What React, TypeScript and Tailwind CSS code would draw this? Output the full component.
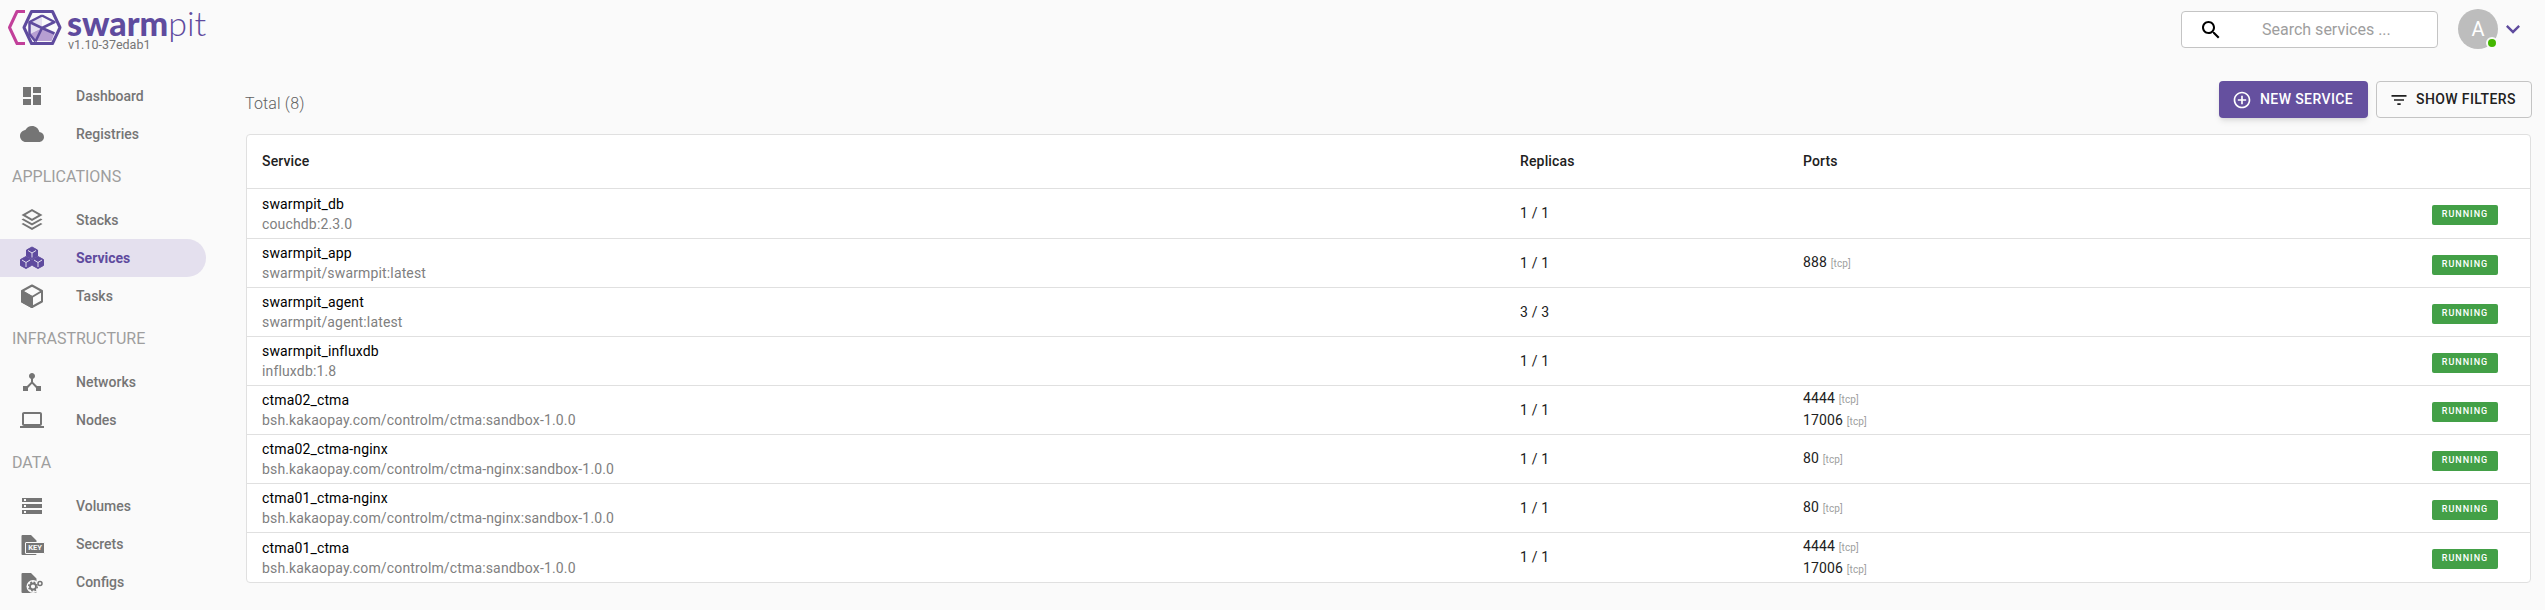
const p = {
  dashboard: "M3 13h8V3H3v10zm0 8h8v-6H3v6zm10 0h8V11h-8v10zm0-18v6h8V3h-8z",
  cloud: "M19.35 10.04C18.67 6.59 15.64 4 12 4 9.11 4 6.6 5.64 5.35 8.04 2.34 8.36 0 10.91 0 14c0 3.31 2.69 6 6 6h13c2.76 0 5-2.24 5-5 0-2.64-2.05-4.78-4.65-4.96z",
  stacks: "M12 1 1.5 7 12 13l10.5-6L12 1zm0 2.3L18.5 7 12 10.7 5.5 7 12 3.300zM3.300 10.500 1.500 11.500 12 17.500l10.500-6-1.800-1L12 15.200 3.300 10.500zm0 4.500-1.800 1L12 22l10.500-6-1.800-1L12 19.700 3.300 15z",
  hub: "M17 16l-4-4V8.820C14.160 8.400 15 7.300 15 6c0-1.660-1.340-3-3-3S9 4.340 9 6c0 1.300.840 2.400 2 2.820V12l-4 4H3v5h5v-3.050l4-4.200 4 4.200V21h5v-5h-4z",
  laptop: "M20 18c1.100 0 1.990-.900 1.990-2L22 6c0-1.100-.900-2-2-2H4c-1.100 0-2 .900-2 2v10c0 1.100.900 2 2 2H0v2h24v-2h-4zM4 6h16v10H4V6z",
  volumes: "M2 20h20v-4H2v4zm2-3h2v2H4v-2zM2 4v4h20V4H2zm4 3H4V5h2v2zm-4 7h20v-4H2v4zm2-3h2v2H4v-2z",
  file: "M2.500 3h8.500l5.500 5.500V22a1 1 0 0 1-1 1h-13a1 1 0 0 1-1-1V4a1 1 0 0 1 1-1z",
  search: "M15.500 14h-.790l-.280-.270C15.410 12.590 16 11.110 16 9.500 16 5.910 13.090 3 9.500 3S3 5.910 3 9.500 5.910 16 9.500 16c1.610 0 3.090-.590 4.230-1.570l.270.280v.790l5 4.990L20.490 19l-4.990-5zm-6 0C7.010 14 5 11.990 5 9.500S7.010 5 9.500 5 14 7.010 14 9.500 11.990 14 9.500 14z",
  add: "M13 7h-2v4H7v2h4v4h2v-4h4v-2h-4V7zm-1-5C6.480 2 2 6.480 2 12s4.480 10 10 10 10-4.480 10-10S17.520 2 12 2zm0 18c-4.410 0-8-3.590-8-8s3.590-8 8-8 8 3.590 8 8-3.590 8-8 8z",
  filter: "M10 18h4v-2h-4v2zM3 6v2h18V6H3zm3 7h12v-2H6v2z",
  more: "M16.590 8.590L12 13.170 7.410 8.590 6 10l6 6 6-6z",
};

const Icon = ({ d, className }: { d: string; className: string }) => (
  <svg viewBox="0 0 24 24" className={className} fill="currentColor">
    <path d={d} />
  </svg>
);

const Logo = () => (
  <svg viewBox="0 0 62 50" className="w-[62px] h-[50px] shrink-0" fill="none">
    <path d="M25 11.500h-8L9.500 27.500 17 43.500h8" stroke="#c2409a" strokeWidth="3" strokeLinejoin="round" />
    <path d="M31.500 11.500h21l7.500 16-7.500 16h-21L24 27.500z" fill="#fafafa" stroke="#5f4b9e" strokeWidth="3" strokeLinejoin="round" />
    <path d="M42 16 30 22v12l12-6.500z" fill="#e4dff0" />
    <path d="M42 28 30 34l4 7h17.500l3-7.500z" fill="#b79fd2" />
    <path d="M42 15.500 29.500 22v12l6 7.500M29.500 22 42 28l12.500-6L42 15.500M42 28v0l-6.500 13.500M42 28l12.500 5.500" stroke="#5f4b9e" strokeWidth="2.500" strokeLinejoin="round" />
  </svg>
);

const Cube = ({ x, y }: { x: number; y: number }) => (
  <g transform={`translate(${x} ${y})`}>
    <path d="M0-6 5.500-3v6L0 6l-5.500-3v-6z" fill="currentColor" stroke="currentColor" strokeWidth="1" strokeLinejoin="round" />
    <path d="M-4-2.500 0 0l4-2.500M0 0v4.500" stroke="#e4e0ee" strokeWidth="1" fill="none" />
  </g>
);

const ServicesIcon = () => (
  <svg viewBox="0 0 24 24" className="w-6 h-6">
    <Cube x={12} y={7} />
    <Cube x={6} y={16.5} />
    <Cube x={18} y={16.5} />
  </svg>
);

const TasksIcon = () => (
  <svg viewBox="0 0 24 24" className="w-6 h-6" fill="none" stroke="currentColor" strokeWidth="2" strokeLinejoin="round">
    <path d="M12 13 2 7.500v10L12 23z" fill="currentColor" />
    <path d="M12 1.500 22 7v10.500L12 23 2 17.500V7zM2 7l10 6 10-6" />
  </svg>
);

const KeyIcon = () => (
  <span className="relative block w-6 h-6">
    <Icon d={p.file} className="w-6 h-6" />
    <span className="absolute left-[5px] top-[10px] w-[20px] h-[12px] border border-[#fafafa] bg-[#757575] rounded-[1px] text-[7.500px] leading-[10px] font-bold text-center text-[#fafafa]">KEY</span>
  </span>
);

const GearIcon = () => (
  <svg viewBox="0 0 24 24" className="w-6 h-6">
    <path d={p.file} fill="currentColor" />
    <circle cx="13" cy="16.500" r="6.500" fill="#fafafa" />
    <circle cx="13" cy="16.500" r="3" fill="none" stroke="currentColor" strokeWidth="1.800" />
    <circle cx="13" cy="16.500" r="4.300" fill="none" stroke="currentColor" strokeWidth="1.500" strokeDasharray="1.700 1.700" />
    <circle cx="20" cy="13.500" r="2" fill="none" stroke="currentColor" strokeWidth="1.500" />
  </svg>
);

const NavItem = ({ label, icon, active }: { label: string; icon: React.ReactNode; active?: boolean }) => (
  <div className={`flex items-center h-[38px] w-[206px] rounded-r-[19px] pl-[20px] ${active ? "bg-[#e4e0ee] text-[#5f4b9e]" : "text-[#757575]"}`}>
    <span className="w-[56px] shrink-0">{icon}</span>
    <span className={`text-[14px] ${active ? "font-bold" : "font-medium"}`}>{label}</span>
  </div>
);

const Group = ({ label }: { label: string }) => (
  <div className="h-[48px] pl-3 flex items-center text-[16px] text-[#9e9e9e]">{label}</div>
);

const nav = (d: string) => <Icon d={d} className="w-6 h-6" />;

const services = [
  { name: "swarmpit_db", image: "couchdb:2.3.0", replicas: "1 / 1", ports: [] as string[], h: "h-[50px]" },
  { name: "swarmpit_app", image: "swarmpit/swarmpit:latest", replicas: "1 / 1", ports: ["888"], h: "h-[49px]" },
  { name: "swarmpit_agent", image: "swarmpit/agent:latest", replicas: "3 / 3", ports: [], h: "h-[49px]" },
  { name: "swarmpit_influxdb", image: "influxdb:1.8", replicas: "1 / 1", ports: [], h: "h-[49px]" },
  { name: "ctma02_ctma", image: "bsh.kakaopay.com/controlm/ctma:sandbox-1.0.0", replicas: "1 / 1", ports: ["4444", "17006"], h: "h-[49px]" },
  { name: "ctma02_ctma-nginx", image: "bsh.kakaopay.com/controlm/ctma-nginx:sandbox-1.0.0", replicas: "1 / 1", ports: ["80"], h: "h-[49px]" },
  { name: "ctma01_ctma-nginx", image: "bsh.kakaopay.com/controlm/ctma-nginx:sandbox-1.0.0", replicas: "1 / 1", ports: ["80"], h: "h-[49px]" },
  { name: "ctma01_ctma", image: "bsh.kakaopay.com/controlm/ctma:sandbox-1.0.0", replicas: "1 / 1", ports: ["4444", "17006"], h: "h-[49px]" },
];

export default function App() {
  return (
    <div className="flex w-[2545px] h-[610px] overflow-hidden bg-[#fafafa] font-['Roboto',sans-serif]">
      <aside className="w-[246px] shrink-0">
        <div className="h-[77px] flex items-start">
          <Logo />
          <div className="ml-[5px] flex flex-col">
            <div className="mt-[9px] text-[#5f4b9e] text-[34px] leading-[28px] font-['Lato',sans-serif] whitespace-nowrap">
              <span className="font-black">swarm</span>
              <span className="font-light">pit</span>
            </div>
            <div className="mt-[2px] text-[12.500px] leading-[12px] text-[#757575] ml-[1px]">v1.10-37edab1</div>
          </div>
        </div>
        <NavItem label="Dashboard" icon={nav(p.dashboard)} />
        <NavItem label="Registries" icon={nav(p.cloud)} />
        <Group label="APPLICATIONS" />
        <NavItem label="Stacks" icon={nav(p.stacks)} />
        <NavItem label="Services" icon={<ServicesIcon />} active />
        <NavItem label="Tasks" icon={<TasksIcon />} />
        <Group label="INFRASTRUCTURE" />
        <NavItem label="Networks" icon={nav(p.hub)} />
        <NavItem label="Nodes" icon={nav(p.laptop)} />
        <Group label="DATA" />
        <NavItem label="Volumes" icon={nav(p.volumes)} />
        <NavItem label="Secrets" icon={<KeyIcon />} />
        <NavItem label="Configs" icon={<GearIcon />} />
      </aside>

      <main className="flex-1 min-w-0 pr-[13px]">
        <div className="h-[58px] flex items-center justify-end pr-[5px]">
          <div className="flex items-center w-[257px] h-[37px] mt-[1px] bg-white border border-[#c4c4c4] rounded-[4px] pl-[17px]">
            <Icon d={p.search} className="w-6 h-6 text-black" />
            <span className="ml-[39px] text-[16px] text-[#9e9e9e]">Search services ...</span>
          </div>
          <div className="relative ml-[20px] w-10 h-10 rounded-full bg-[#bdbdbd] flex items-center justify-center text-white text-[20px]">
            A
            <span className="absolute right-0 bottom-0 w-[12px] h-[12px] rounded-full bg-[#44b700] border-2 border-[#fafafa]" />
          </div>
          <Icon d={p.more} className="ml-[1px] w-7 h-7 text-[#5f4b9e]" />
        </div>

        <div className="h-[76px] pt-[23px] flex items-start justify-between">
          <span className="mt-[11px] -ml-px text-[16px] leading-[24px] tracking-[0.15px] text-[#616161] font-light">Total (8)</span>
          <div className="flex items-center gap-2">
            <div className="flex items-center h-[37px] w-[149px] pl-[13px] rounded-[4px] bg-[#65509f] text-white text-[14px] font-medium tracking-[0.4px] shadow-md">
              <Icon d={p.add} className="w-[20px] h-[20px] mr-[8px]" />
              NEW SERVICE
            </div>
            <div className="flex items-center h-[37px] w-[156px] pl-[12px] rounded-[4px] border border-[#c4c4c4] bg-[#fafafa] text-[#212121] text-[14px] font-medium tracking-[0.4px]">
              <Icon d={p.filter} className="w-[20px] h-[20px] mr-[7px]" />
              SHOW FILTERS
            </div>
          </div>
        </div>

        <div className="w-[2285px] bg-white border border-[#e0e0e0] rounded-[4px] overflow-hidden tracking-[0.15px]">
          <div className="flex items-center h-[54px] border-b border-[#e0e0e0] text-[14px] font-medium text-[#212121] pl-[15px]">
            <div className="w-[1258px]">Service</div>
            <div className="w-[283px]">Replicas</div>
            <div>Ports</div>
          </div>
          {services.map((s, i) => (
            <div key={s.name} className={`flex items-center ${s.h} pl-[15px] pr-[32px] text-[14px] ${i < services.length - 1 ? "border-b border-[#e0e0e0]" : ""}`}>
              <div className="w-[1258px] leading-[20px]">
                <div className="text-black">{s.name}</div>
                <div className="text-[#808080]">{s.image}</div>
              </div>
              <div className="w-[283px] text-[#212121]">{s.replicas}</div>
              <div className="flex-1 leading-[20px] text-[#212121]">
                {s.ports.map((port) => (
                  <div key={port}>
                    {port} <span className="text-[10px] text-[#9e9e9e]">[tcp]</span>
                  </div>
                ))}
              </div>
              <span className="w-[66px] h-[20px] mt-[3px] rounded-[2px] bg-[#43a047] text-white text-[9px] font-medium tracking-[1px] flex items-center justify-center">
                RUNNING
              </span>
            </div>
          ))}
        </div>
      </main>
    </div>
  );
}
